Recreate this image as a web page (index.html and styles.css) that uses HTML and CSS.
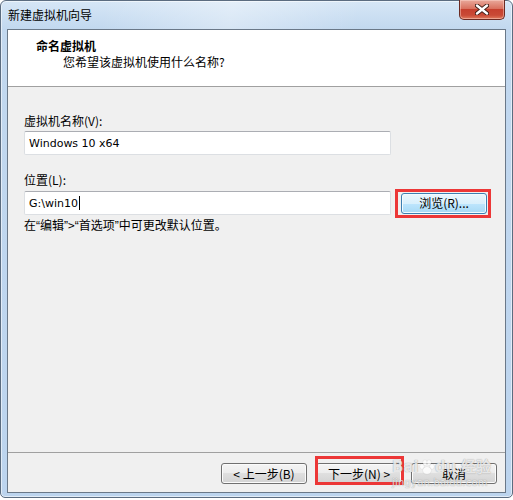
FILE: index.html
```html
<!DOCTYPE html>
<html lang="zh-CN">
<head>
    <meta charset="UTF-8">
    <meta name="viewport" content="width=device-width, initial-scale=1.0">
    <title>新建虚拟机向导</title>
    <link rel="stylesheet" href="styles.css">
</head>
<body>
    <div class="window">
        <div class="titlebar">
            <span class="title">新建虚拟机向导</span>
            <button class="close" aria-label="关闭">
                <svg width="14" height="11" viewBox="0 0 14 11">
                    <path d="M2 1.5 L12 9.5 M12 1.5 L2 9.5" stroke="#3a1a14" stroke-width="4.2" stroke-linecap="round"/>
                    <path d="M2 1.5 L12 9.5 M12 1.5 L2 9.5" stroke="#fff" stroke-width="2.4" stroke-linecap="round"/>
                </svg>
            </button>
        </div>
        <div class="client">
            <div class="wizard-header">
                <div class="step-title">命名虚拟机</div>
                <div class="step-desc">您希望该虚拟机使用什么名称?</div>
            </div>
            <div class="wizard-body">
                <div class="field-label">虚拟机名称(V):</div>
                <div class="textbox">Windows 10 x64</div>
                <div class="field-label second">位置(L):</div>
                <div class="path-row">
                    <div class="textbox grow">G:\win10<span class="caret"></span></div>
                    <button class="btn btn-hot marked marked-browse">浏览(R)...</button>
                </div>
                <div class="hint">在<span class="q">“</span>编辑<span class="q">”</span>&gt;<span class="q">“</span>首选项<span class="q">”</span>中可更改默认位置。</div>
            </div>
            <div class="wizard-footer">
                <button class="btn">&lt; 上一步(B)</button>
                <button class="btn marked marked-next">下一步(N) &gt;</button>
                <button class="btn">取消</button>
            </div>
        </div>
        <div class="watermark">
            <span class="wm-brand">Bai<span class="paw"><i></i><i></i><i></i><i></i><b></b></span>du 经验</span>
            <span class="wm-site">jingyan.baidu.com</span>
        </div>
    </div>
</body>
</html>
```

FILE: styles.css
```css
:root {
    --frame-color: #bcd4ee;
    --frame-edge: #5b6c80;
    --client-bg: #f0f0f0;
    --line-color: #a0a0a0;
    --mark-color: #ec3737;
}

* {
    box-sizing: border-box;
}

body {
    margin: 0;
    background-color: #ffffff;
    font-family: "Noto Sans CJK SC", "Microsoft YaHei", sans-serif;
    font-size: 12px;
    color: #000000;
}

.window {
    position: relative;
    width: 513px;
    height: 498px;
    display: flex;
    flex-direction: column;
    padding: 0 6px 4px;
    border: 1px solid var(--frame-edge);
    border-radius: 6px 6px 5px 5px;
    background:
        linear-gradient(100deg, rgba(255, 255, 255, 0) 20%, rgba(255, 255, 255, 0.35) 45%, rgba(255, 255, 255, 0) 70%) top / 100% 28px no-repeat,
        linear-gradient(to bottom, #d6e6f6, #c2d8ef 28px, var(--frame-color));
    box-shadow: inset 0 0 0 1px rgba(255, 255, 255, 0.55);
}

/* title bar */
.titlebar {
    height: 28px;
    display: flex;
    align-items: center;
    justify-content: space-between;
}

.title {
    padding-left: 1px;
    line-height: 16px;
    color: #000000;
}

.close {
    align-self: flex-start;
    width: 46px;
    height: 20px;
    margin-top: -1px;
    margin-right: 1px;
    padding: 0;
    display: flex;
    align-items: center;
    justify-content: center;
    border: 1px solid #6b2a22;
    border-top: none;
    border-radius: 0 0 5px 5px;
    background: linear-gradient(to bottom, #e9a99b, #d9715f 45%, #c6402e 50%, #c94a36 80%, #e07b5e);
    box-shadow: inset 0 0 0 1px rgba(255, 220, 210, 0.45);
}

/* client area */
.client {
    flex: 1;
    display: flex;
    flex-direction: column;
    background-color: var(--client-bg);
    border: 1px solid #6a7888;
}

.wizard-header {
    background-color: #ffffff;
    border-bottom: 1px solid var(--line-color);
    padding: 8px 0 16px 28px;
    line-height: 16px;
}

.step-title {
    font-weight: bold;
}

.step-desc {
    margin-left: 27px;
}

.wizard-body {
    padding: 26px 16px 0;
}

.field-label {
    line-height: 16px;
    margin-bottom: 2px;
}

.field-label.second {
    margin-top: 17px;
    margin-bottom: 3px;
}

.textbox {
    width: 367px;
    height: 24px;
    display: flex;
    align-items: center;
    padding-left: 4px;
    background-color: #ffffff;
    border: 1px solid #dcdfe3;
    border-top-color: #abadb3;
    border-radius: 2px;
    font-family: "DejaVu Sans", sans-serif;
    font-size: 11px;
}

.caret {
    width: 1px;
    height: 14px;
    margin-left: 1px;
    background-color: #000000;
}

.path-row {
    display: flex;
    align-items: center;
    gap: 10px;
}

.hint {
    margin-top: 2px;
    line-height: 16px;
}

.hint .q {
    font-family: "Liberation Sans", sans-serif;
}

/* buttons */
.btn {
    width: 86px;
    height: 21px;
    padding: 0;
    font-family: inherit;
    font-size: 12px;
    line-height: 16px;
    color: #000000;
    border: 1px solid #707070;
    border-radius: 3px;
    background: linear-gradient(to bottom, #f4f4f4, #ececec 50%, #dfdfdf 50%, #d3d3d3);
    box-shadow: inset 0 0 0 1px #fbfbfb;
}

.btn-hot {
    border-color: #3c7fb1;
    background: linear-gradient(to bottom, #eaf6fd, #d9f0fc 50%, #bee6fd 50%, #a7d9f5);
    box-shadow: inset 0 0 0 1px #f2fbff;
}

.marked {
    position: relative;
}

.marked::after {
    content: "";
    position: absolute;
    border: 3px solid var(--mark-color);
    pointer-events: none;
}

.marked-browse::after {
    top: -5px;
    bottom: -5px;
    left: -7px;
    right: -5px;
}

.marked-next::after {
    top: -8px;
    bottom: -2px;
    left: -2px;
    right: -3px;
}

.wizard-footer {
    margin-top: auto;
    display: flex;
    justify-content: flex-end;
    gap: 9px;
    padding: 10px 8px 8px;
    border-top: 1px solid var(--line-color);
}

/* site watermark stamped over the corner */
.watermark {
    position: absolute;
    left: 391px;
    top: 456px;
    display: flex;
    flex-direction: column;
    color: rgba(255, 255, 255, 0.75);
    text-shadow: 0 0 1px rgba(90, 90, 90, 0.35), 0 0 1px rgba(90, 90, 90, 0.35);
    pointer-events: none;
}

.wm-brand {
    display: flex;
    align-items: center;
    font-family: "DejaVu Sans", sans-serif;
    font-weight: bold;
    font-size: 15px;
    line-height: 20px;
}

.paw {
    position: relative;
    width: 14px;
    height: 16px;
    margin: 0 1px;
}

.paw i,
.paw b {
    position: absolute;
    background: rgba(255, 255, 255, 0.75);
    box-shadow: 0 0 1px rgba(90, 90, 90, 0.4);
    border-radius: 50%;
}

.paw i {
    width: 4px;
    height: 5px;
}

.paw i:nth-child(1) { left: 0; top: 5px; }
.paw i:nth-child(2) { left: 3px; top: 1px; }
.paw i:nth-child(3) { left: 7px; top: 1px; }
.paw i:nth-child(4) { left: 10px; top: 5px; }

.paw b {
    left: 3px;
    top: 8px;
    width: 8px;
    height: 7px;
}

.wm-site {
    margin-top: 1px;
    font-family: "DejaVu Sans", sans-serif;
    font-size: 10px;
    line-height: 10px;
    letter-spacing: 0.2px;
}
```
